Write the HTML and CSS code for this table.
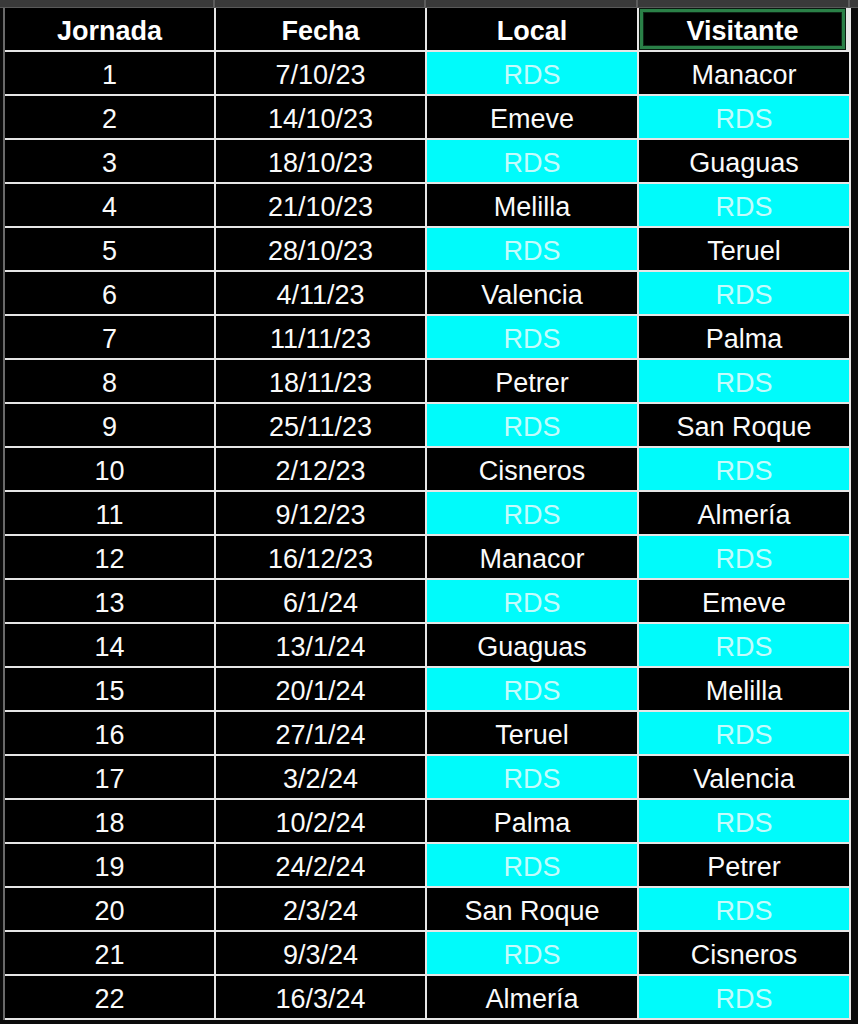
FILE: index.html
```html
<!DOCTYPE html>
<html lang="es">
<head>
<meta charset="utf-8">
<title>Calendario RDS</title>
<link rel="stylesheet" href="styles.css">
</head>
<body>
<div class="page">
  <div class="colbar">
    <div class="colhead"></div>
    <div class="colhead"></div>
    <div class="colhead"></div>
    <div class="colhead"></div>
  </div>
  <div class="sheet" id="sheet">
    <div class="cell head">Jornada</div>
    <div class="cell head">Fecha</div>
    <div class="cell head">Local</div>
    <div class="cell head selected">Visitante</div>
  </div>
</div>
<script src="app.js"></script>
</body>
</html>
```

FILE: app.js
```js
const rows = [
  ["1","7/10/23","RDS","Manacor"],
  ["2","14/10/23","Emeve","RDS"],
  ["3","18/10/23","RDS","Guaguas"],
  ["4","21/10/23","Melilla","RDS"],
  ["5","28/10/23","RDS","Teruel"],
  ["6","4/11/23","Valencia","RDS"],
  ["7","11/11/23","RDS","Palma"],
  ["8","18/11/23","Petrer","RDS"],
  ["9","25/11/23","RDS","San Roque"],
  ["10","2/12/23","Cisneros","RDS"],
  ["11","9/12/23","RDS","Almería"],
  ["12","16/12/23","Manacor","RDS"],
  ["13","6/1/24","RDS","Emeve"],
  ["14","13/1/24","Guaguas","RDS"],
  ["15","20/1/24","RDS","Melilla"],
  ["16","27/1/24","Teruel","RDS"],
  ["17","3/2/24","RDS","Valencia"],
  ["18","10/2/24","Palma","RDS"],
  ["19","24/2/24","RDS","Petrer"],
  ["20","2/3/24","San Roque","RDS"],
  ["21","9/3/24","RDS","Cisneros"],
  ["22","16/3/24","Almería","RDS"]
];
const sheet = document.getElementById("sheet");
rows.forEach(r => {
  r.forEach(v => {
    const d = document.createElement("div");
    d.className = "cell" + (v === "RDS" ? " rds" : "");
    d.textContent = v;
    sheet.appendChild(d);
  });
});
```

FILE: styles.css
```css
html, body {
  margin: 0;
  padding: 0;
  background: #0b0b0b;
}
body {
  font-family: "Liberation Sans", Arial, sans-serif;
  width: 858px;
  height: 1024px;
  overflow: hidden;
}
.page {
  display: flex;
  flex-direction: column;
  width: 858px;
}
.colbar {
  display: grid;
  grid-template-columns: 212px 211px 212px 212px;
  height: 7px;
  background: #3a3a3a;
  border-bottom: 1px solid #5a5a5a;
  padding-left: 3px;
  box-sizing: content-box;
}
.colhead {
  border-right: 2px solid #5c5c5c;
}
.sheet {
  margin-left: 3px;
  width: 848px;
  display: grid;
  grid-template-columns: 209px 209px 210px 210px;
  grid-auto-rows: 42px;
  gap: 2px;
  background: #e6e6e6;
  border-left: 2px solid #6a6a6a;
  padding-right: 2px;
  padding-bottom: 2px;
  box-sizing: border-box;
}
.cell {
  background: #000;
  color: #fafafa;
  font-size: 27px;
  display: flex;
  align-items: center;
  justify-content: center;
  white-space: nowrap;
  padding-top: 4px;
  box-sizing: border-box;
}
.head {
  font-weight: bold;
  color: #fff;
}
.selected {
  box-shadow: inset 0 0 0 1px #0a1a10, inset 0 0 0 4px #2a8047, inset 0 0 0 5px #0d2616;
  margin-right: 3px;
}
.rds {
  background: #00fbfb;
  color: #c4fbfb;
}
```
